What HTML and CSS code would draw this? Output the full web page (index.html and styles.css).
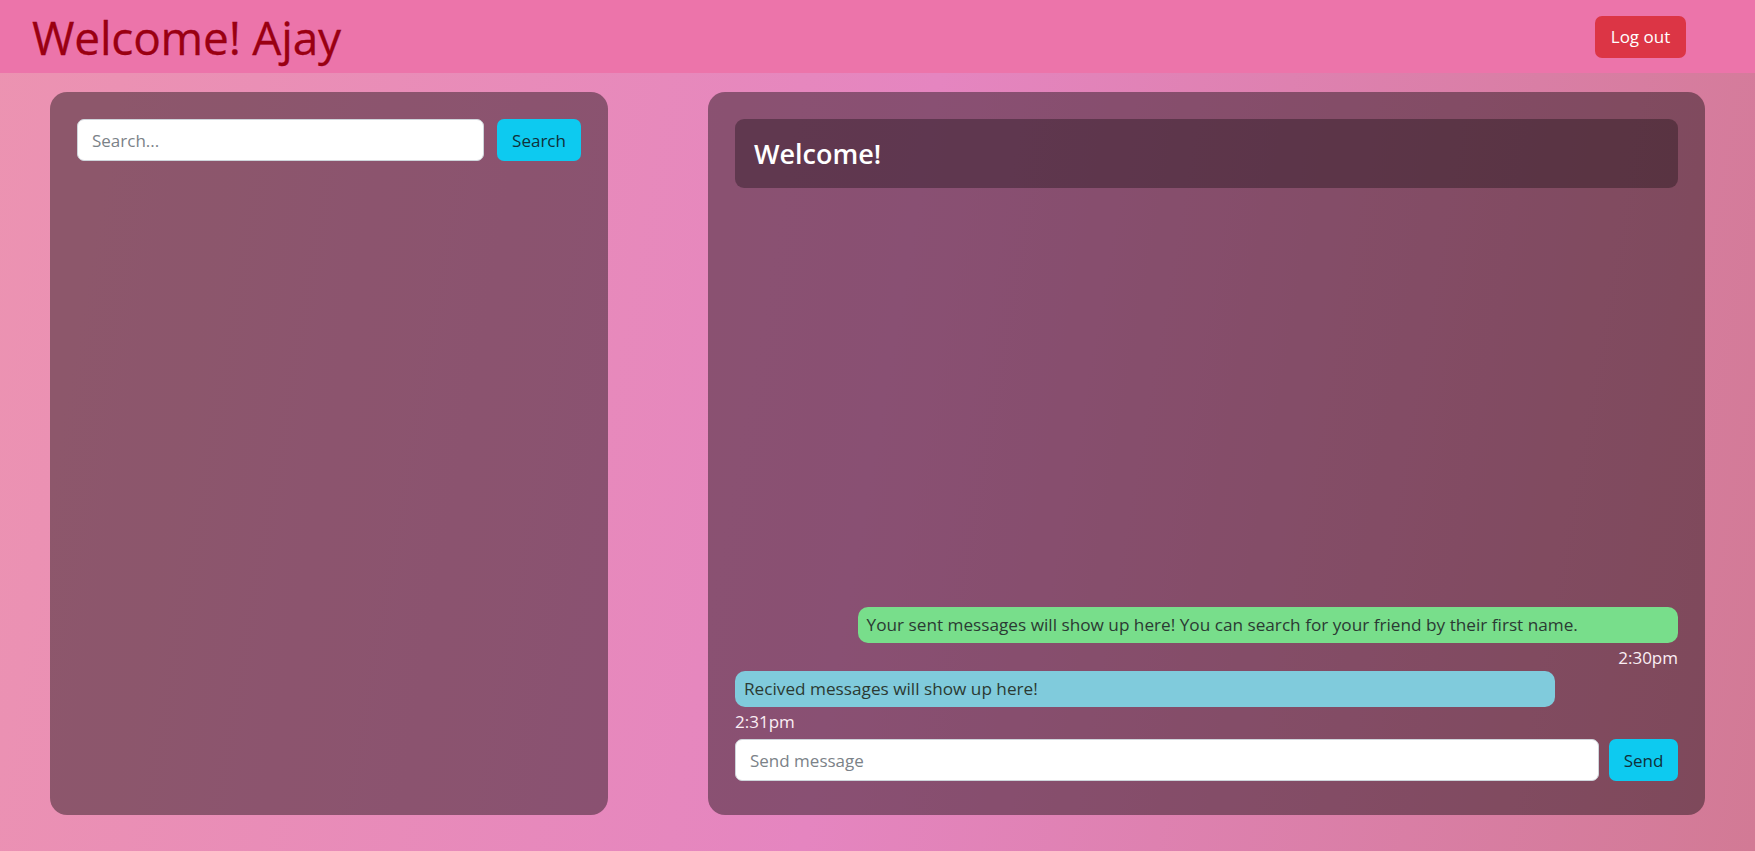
FILE: index.html
```html
<!DOCTYPE html>
<html lang="en">
<head>
<meta charset="utf-8">
<title>Chat</title>
<link rel="stylesheet" href="styles.css">
</head>
<body>
<header class="topbar">
  <h1 class="title">Welcome! Ajay</h1>
  <button class="btn btn-danger">Log out</button>
</header>
<main class="main">
  <section class="panel panel-left">
    <form class="search-row">
      <input class="field" type="text" placeholder="Search...">
      <button type="button" class="btn btn-info">Search</button>
    </form>
  </section>
  <section class="panel panel-right">
    <div class="chat-head"><h3>Welcome!</h3></div>
    <div class="messages">
      <div class="msg sent">
        <div class="bubble bubble-sent">Your sent messages will show up here! You can search for your friend by their first name.</div>
        <div class="time">2:30pm</div>
      </div>
      <div class="msg received">
        <div class="bubble bubble-received">Recived messages will show up here!</div>
        <div class="time">2:31pm</div>
      </div>
    </div>
    <form class="send-row">
      <input class="field" type="text" placeholder="Send message">
      <button type="button" class="btn btn-info btn-send">Send</button>
    </form>
  </section>
</main>
</body>
</html>
```
FILE: styles.css
```css
* { box-sizing: border-box; }
html, body { height: 100%; }
body {
  margin: 0;
  font-family: "Open Sans", "Noto Sans", sans-serif;
  background: linear-gradient(100deg, #ec93b1 0%, #e585c0 50%, #d27a95 100%);
  display: flex;
  flex-direction: column;
  overflow: hidden;
}
.topbar {
  height: 73px;
  flex: none;
  background: #ec74aa;
  display: flex;
  align-items: center;
  justify-content: space-between;
  padding: 0 69px 0 32px;
}
.title {
  margin: 0;
  font-weight: 400;
  font-size: 46px;
  color: #9a0012;
  line-height: 1;
  letter-spacing: -0.2px;
  -webkit-text-stroke: 0.3px #9a0012;
}
.btn {
  border: none;
  border-radius: 7px;
  font-family: inherit;
  font-size: 17px;
  cursor: pointer;
  height: 42px;
  padding: 0 13px;
}
.btn-danger { background: #dc3545; color: #fff; width: 91px; }
.btn-info { background: #0dcaf0; color: #10303a; }
.main {
  flex: 1;
  display: flex;
  gap: 100px;
  padding: 19px 50px 36px;
  min-height: 0;
}
.panel {
  background: rgba(0, 0, 0, 0.4);
  border-radius: 17px;
  padding: 27px;
}
.panel-left { width: 558px; flex: none; }
.panel-right {
  flex: 1;
  display: flex;
  flex-direction: column;
  padding-bottom: 34px;
}
.search-row, .send-row {
  display: flex;
  gap: 13px;
  margin: 0;
}
.send-row { gap: 10px; }
.field {
  flex: 1;
  height: 42px;
  border: 1px solid #ced4da;
  border-radius: 7px;
  padding: 0 14px;
  font-family: inherit;
  font-size: 17px;
  color: #212529;
  background: #fff;
}
.field::placeholder { color: #7b8288; }
.search-row .btn { width: 84px; }
.btn-send { width: 69px; padding: 0; }
.chat-head {
  height: 69px;
  background: rgba(0, 0, 0, 0.3);
  border-radius: 9px;
  display: flex;
  align-items: center;
  padding-left: 19px;
}
.chat-head h3 {
  margin: 0;
  color: #fff;
  font-size: 27px;
  font-weight: 600;
}
.messages {
  flex: 1;
  display: flex;
  flex-direction: column;
  justify-content: flex-end;
  padding-bottom: 5px;
}
.msg { display: flex; flex-direction: column; }
.msg.sent { align-items: flex-end; margin-bottom: 1px; }
.msg.received { align-items: flex-start; }
.bubble {
  width: 87%;
  min-height: 36px;
  border-radius: 10px;
  padding: 6px 9px;
  font-size: 17.2px;
  line-height: 24px;
  color: #2b3a33;
}
.bubble-sent { background: #78de8b; }
.bubble-received { background: #80cbdc; }
.time {
  color: #fbeef4;
  font-size: 17px;
  line-height: 24px;
  margin-top: 3px;
}
```
